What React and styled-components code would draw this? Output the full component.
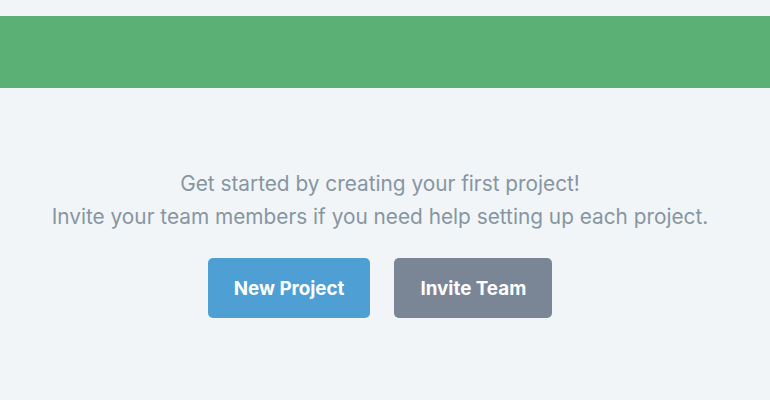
import styled, { createGlobalStyle } from 'styled-components'

const GlobalStyle = createGlobalStyle`
  html, body {
    margin: 0;
    padding: 0;
    background: #f1f5f8;
    font-family: Inter, "Liberation Sans", sans-serif;
  }
`

const Page = styled.div`
  min-height: 400px;
  padding-top: 16px;
  display: flex;
  flex-direction: column;
`

const Banner = styled.div`
  height: 72px;
  background: #5bb075;
`

const Content = styled.div`
  padding-right: 10px;
  display: flex;
  flex-direction: column;
  align-items: center;
`

const Intro = styled.div`
  margin-top: 79px;
  text-align: center;
  color: #8795a1;
  font-size: 20.8px;
  line-height: 33px;
`

const Line = styled.p`
  margin: 0;
`

const Actions = styled.div`
  margin-top: 25px;
  display: flex;
  gap: 24px;
`

const Button = styled.button`
  height: 60px;
  padding: 0 26px;
  border: none;
  border-radius: 5px;
  background: ${p => (p.$variant === 'secondary' ? '#7a8696' : '#4d9fd4')};
  color: #fff;
  font-family: Inter, "Liberation Sans", sans-serif;
  font-size: 18.8px;
  font-weight: 700;
`

export default function App() {
  return (
    <>
      <GlobalStyle />
      <Page>
        <Banner />
        <Content>
          <Intro>
            <Line>Get started by creating your first project!</Line>
            <Line>Invite your team members if you need help setting up each project.</Line>
          </Intro>
          <Actions>
            <Button>New Project</Button>
            <Button $variant='secondary'>Invite Team</Button>
          </Actions>
        </Content>
      </Page>
    </>
  )
}
